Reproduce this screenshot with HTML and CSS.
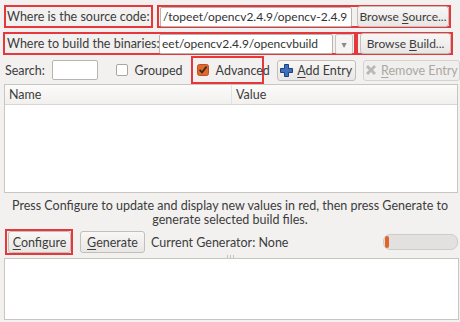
FILE: index.html
```html
<!DOCTYPE html>
<html lang="en">
<head>
    <meta charset="UTF-8">
    <title>CMake</title>
    <link rel="stylesheet" href="styles.css">
</head>
<body>
    <div class="window">
        <div class="path-row first">
            <div class="mark src-label">Where is the source code:</div>
            <div class="mark src-box">
                <div class="field src-field">/topeet/opencv2.4.9/opencv-2.4.9</div>
                <button class="btn browse-btn"><span>Browse <u>S</u>ource...</span></button>
            </div>
        </div>

        <div class="path-row second">
            <div class="mark bin-box">
                <span class="bin-label">Where to build the binaries:</span>
                <div class="combo">
                    <div class="field bin-field">eet/opencv2.4.9/opencvbuild</div>
                    <div class="combo-arrow">▾</div>
                </div>
            </div>
            <div class="mark build-box">
                <button class="btn browse-btn"><span>Browse <u>B</u>uild...</span></button>
            </div>
        </div>

        <div class="tool-row">
            <span class="search-label">Search:</span>
            <div class="field search-field"></div>
            <label class="check grouped">
                <span class="box"></span>
                <span>Grouped</span>
            </label>
            <div class="mark adv-box">
                <label class="check">
                    <svg class="box-on" width="12" height="12" viewBox="0 0 12 12">
                        <rect x="0.5" y="0.5" width="11" height="11" rx="2" fill="#e2692e" stroke="#b9531f"/>
                        <path d="M2.6 5.8 L5 8.4 L9.6 2.6" fill="none" stroke="#3a2a20" stroke-width="1.7"/>
                    </svg>
                    <span>Advanced</span>
                </label>
            </div>
            <button class="btn entry-btn add">
                <svg width="13" height="13" viewBox="0 0 13 13">
                    <path d="M4.5 0.5h4v4h4v4h-4v4h-4v-4h-4v-4h4z" fill="#3d6fbd" stroke="#1f3f7a"/>
                </svg>
                <span><u>A</u>dd Entry</span>
            </button>
            <button class="btn entry-btn remove">
                <svg width="12" height="12" viewBox="0 0 12 12">
                    <path d="M1 3l2-2 3 3 3-3 2 2-3 3 3 3-2 2-3-3-3 3-2-2 3-3z" fill="#b9b8b5"/>
                </svg>
                <span><u>R</u>emove Entry</span>
            </button>
        </div>

        <div class="table">
            <div class="table-head">
                <div class="col name-col">Name</div>
                <div class="col value-col">Value</div>
            </div>
        </div>

        <p class="hint">Press Configure to update and display new values in red, then press Generate to generate selected build files.</p>

        <div class="action-row">
            <div class="mark conf-box">
                <button class="btn action-btn"><span><u>C</u>onfigure</span></button>
            </div>
            <button class="btn action-btn generate"><span><u>G</u>enerate</span></button>
            <span class="generator">Current Generator: None</span>
            <div class="progress"><span class="progress-fill"></span></div>
        </div>

        <div class="splitter"><span></span><span></span><span></span></div>

        <div class="output"></div>
    </div>
</body>
</html>
```

FILE: styles.css
```css
* {
    margin: 0;
    padding: 0;
    box-sizing: border-box;
}

body {
    background: #f2f1f0;
    font-family: 'Lato', 'DejaVu Sans', sans-serif;
    font-size: 12.5px;
    color: #3c3c3c;
    width: 460px;
    height: 322px;
    overflow: hidden;
}

.window {
    display: flex;
    flex-direction: column;
}

u {
    text-decoration: underline;
    text-underline-offset: 2px;
}

/* red annotation frames */
.mark {
    border: 2px solid #e4383d;
    display: flex;
    align-items: center;
    white-space: nowrap;
}

.field {
    background: white;
    border: 1px solid #b8b5b0;
    border-radius: 2px;
    height: 20px;
    line-height: 18px;
    padding: 0 2px;
    font-size: 12px;
    white-space: nowrap;
    overflow: hidden;
    color: #333;
}

.btn {
    font-family: inherit;
    font-size: 12.5px;
    color: #3c3c3c;
    background: linear-gradient(#f8f7f6, #e9e7e5);
    border: 1px solid #c2bfbb;
    border-radius: 3px;
    height: 21px;
    display: flex;
    align-items: center;
    justify-content: center;
    gap: 4px;
    white-space: nowrap;
}

/* source / build rows */
.path-row {
    display: flex;
    align-items: center;
    height: 23px;
}

.path-row.first {
    margin-top: 5px;
}

.path-row.second {
    margin-top: 4px;
}

.src-label {
    margin-left: 4px;
    width: 149px;
    height: 23px;
    padding-left: 1px;
}

.src-box {
    margin-left: 4px;
    width: 294px;
    height: 23px;
    padding-left: 1px;
    gap: 5px;
}

.src-field {
    width: 192px;
}

.browse-btn {
    width: 92px;
    font-size: 12px;
}

.bin-box {
    margin-left: 3px;
    width: 353px;
    height: 23px;
    padding-left: 2px;
}

.bin-label {
    width: 152px;
}

.combo {
    display: flex;
    gap: 2px;
}

.bin-field {
    width: 174px;
}

.combo-arrow {
    width: 18px;
    height: 20px;
    border: 1px solid #c8c5c0;
    border-radius: 2px;
    background: #f6f5f4;
    color: #888;
    font-size: 10px;
    text-align: center;
    line-height: 18px;
}

.build-box {
    width: 97px;
    height: 23px;
    padding-left: 2px;
}

/* search / filter row */
.tool-row {
    display: flex;
    align-items: center;
    height: 28px;
    margin-top: 1px;
}

.search-label {
    margin-left: 5px;
}

.search-field {
    margin-left: 7px;
    width: 46px;
}

.check {
    display: flex;
    align-items: center;
    gap: 7px;
    white-space: nowrap;
}

.grouped {
    margin-left: 18px;
}

.box {
    width: 12px;
    height: 12px;
    background: white;
    border: 1px solid #a9a6a1;
    border-radius: 2px;
}

.adv-box {
    margin-left: 8px;
    width: 73px;
    height: 28px;
    padding-left: 4px;
}

.entry-btn {
    height: 21px;
}

.entry-btn.add {
    margin-left: 13px;
    width: 80px;
}

.entry-btn.remove {
    margin-left: 7px;
    width: 98px;
    color: #a9a7a3;
    background: #f1efee;
    border-color: #d6d3cf;
}

/* cache table */
.table {
    margin: 0 2px 0 4px;
    height: 109px;
    background: white;
    border: 1px solid #c9c6c1;
}

.table-head {
    display: flex;
    height: 20px;
    border-bottom: 1px solid #d9d6d2;
    background: linear-gradient(#fbfbfa, #f1f0ef);
}

.col {
    line-height: 19px;
    padding-left: 4px;
}

.name-col {
    width: 227px;
    border-right: 1px solid #e4e2df;
}

.hint {
    text-align: center;
    line-height: 14px;
    margin-top: 6px;
    padding: 0 4px;
}

/* configure row */
.action-row {
    display: flex;
    align-items: center;
    height: 26px;
    margin-top: 2px;
}

.conf-box {
    margin-left: 5px;
    width: 68px;
    height: 26px;
    padding-left: 1px;
}

.action-btn {
    width: 63px;
    height: 22px;
}

.action-btn.generate {
    margin-left: 7px;
    width: 65px;
}

.generator {
    margin-left: 6px;
}

.progress {
    margin-left: auto;
    margin-right: 2px;
    width: 75px;
    height: 16px;
    border: 1px solid #cfccc8;
    border-radius: 7px;
    background: #e3e1df;
    display: flex;
    align-items: center;
    padding-left: 1px;
}

.progress-fill {
    width: 4px;
    height: 12px;
    border-radius: 2px;
    background: #e0642c;
}

.splitter {
    height: 3px;
    display: flex;
    justify-content: center;
    gap: 2px;
}

.splitter span {
    width: 1px;
    height: 3px;
    background: #c5c2be;
}

.output {
    margin: 0 1px 0 4px;
    height: 62px;
    background: white;
    border: 1px solid #c9c6c1;
}
```
